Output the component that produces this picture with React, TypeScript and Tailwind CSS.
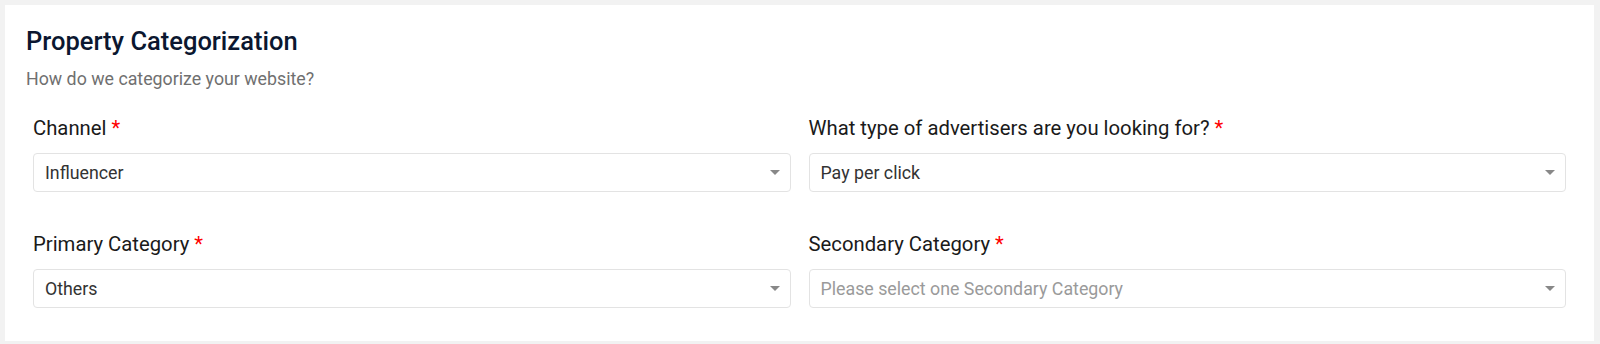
type Field = {
  label: string;
  value?: string;
  placeholder?: string;
};

const fields: Field[] = [
  { label: "Channel", value: "Influencer" },
  { label: "What type of advertisers are you looking for?", value: "Pay per click" },
  { label: "Primary Category", value: "Others" },
  { label: "Secondary Category", placeholder: "Please select one Secondary Category" },
];

function SelectBox({ value, placeholder }: { value?: string; placeholder?: string }) {
  return (
    <div className="flex h-[39px] items-center justify-between rounded-[4px] border border-[#e3e3e3] bg-white pl-[11px] pr-[10px]">
      <span className={`pt-[2px] text-[17.8px] ${value ? "text-[#333333]" : "text-[#9a9a9a]"}`}>
        {value || placeholder}
      </span>
      <span className="h-0 w-0 border-x-[5px] border-t-[5px] border-x-transparent border-t-[#888888]" />
    </div>
  );
}

export default function App() {
  return (
    <div
      className="h-[344px] overflow-hidden bg-[#f2f2f2] pl-[5px] pr-[6px] pt-[5px]"
      style={{ fontFamily: "Roboto, 'Liberation Sans', sans-serif" }}
    >
      <div className="h-[336px] bg-white pt-5">
        <div className="px-[21px]">
          <h2 className="text-[25.5px] font-medium leading-[32px] text-[#0b1730]">Property Categorization</h2>
          <p className="mt-[10px] text-[17.8px] leading-[24px] text-[#707070]">How do we categorize your website?</p>
        </div>
        <div className="mt-[23px] grid grid-cols-2 gap-x-[18px] gap-y-[38px] px-[28px]">
          {fields.map((f) => (
            <div key={f.label}>
              <label className="mb-[11px] block text-[20.3px] leading-[28px] text-[#1a1a1a]">
                {f.label} <span className="text-[#ff0000]">*</span>
              </label>
              <SelectBox value={f.value} placeholder={f.placeholder} />
            </div>
          ))}
        </div>
      </div>
    </div>
  );
}
